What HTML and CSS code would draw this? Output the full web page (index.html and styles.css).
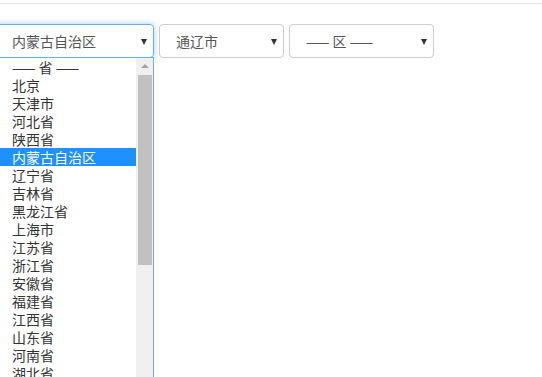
FILE: index.html
```html
<!DOCTYPE html>
<html>
<head>
    <title>省市区选择</title>
    <link rel="stylesheet" href="styles.css">
</head>
<body>
    <div class="topbar"></div>

    <div class="picker">
        <div class="field">
            <div class="select select-province focus">
                <span class="value">内蒙古自治区</span>
                <span class="arrow"></span>
            </div>
            <div class="plist">
                <div class="plist-items">
                    <div class="pitem">—— 省 ——</div>
                    <div class="pitem">北京</div>
                    <div class="pitem">天津市</div>
                    <div class="pitem">河北省</div>
                    <div class="pitem">陕西省</div>
                    <div class="pitem current">内蒙古自治区</div>
                    <div class="pitem">辽宁省</div>
                    <div class="pitem">吉林省</div>
                    <div class="pitem">黑龙江省</div>
                    <div class="pitem">上海市</div>
                    <div class="pitem">江苏省</div>
                    <div class="pitem">浙江省</div>
                    <div class="pitem">安徽省</div>
                    <div class="pitem">福建省</div>
                    <div class="pitem">江西省</div>
                    <div class="pitem">山东省</div>
                    <div class="pitem">河南省</div>
                    <div class="pitem">湖北省</div>
                </div>
                <div class="sbar">
                    <div class="sbar-up"></div>
                    <div class="sbar-thumb"></div>
                </div>
            </div>
        </div>
        <div class="select select-city">
            <span class="value">通辽市</span>
            <span class="arrow"></span>
        </div>
        <div class="select select-area">
            <span class="value">—— 区 ——</span>
            <span class="arrow"></span>
        </div>
    </div>
</body>
</html>
```

FILE: styles.css
```css
body {
    margin: 0;
    font-family: "Noto Sans CJK SC", "DejaVu Sans", sans-serif;
    background-color: #fff;
}
.topbar {
    height: 3px;
    border-bottom: 1px solid #e5e5e5;
}
.picker {
    display: flex;
    align-items: flex-start;
    gap: 5px;
    margin: 20px 0 0 -5px;
}
.field {
    width: 159px;
}
.select {
    position: relative;
    box-sizing: border-box;
    height: 34px;
    border: 1px solid #ccc;
    border-radius: 4px;
    display: flex;
    align-items: center;
    padding-left: 16px;
    font-size: 14px;
    color: #555;
}
.select-province {
    width: 159px;
}
.select-city {
    width: 125px;
}
.select-area {
    width: 145px;
}
.select.focus {
    border-color: #66afe9;
    box-shadow: 0 0 6px rgba(102, 175, 233, .6);
}
.arrow {
    position: absolute;
    right: 6px;
    top: 14px;
    width: 0;
    height: 0;
    border-left: 3.5px solid transparent;
    border-right: 3.5px solid transparent;
    border-top: 6px solid #333;
}
.plist {
    position: relative;
    z-index: 10;
    margin-top: -1px;
    width: 159px;
    height: 330px;
    box-sizing: border-box;
    border: 1px solid #7aa7e8;
    border-top-color: #66afe9;
    background-color: #fff;
    display: flex;
    overflow: hidden;
}
.plist-items {
    flex: 1;
}
.pitem {
    height: 18px;
    line-height: 18px;
    padding-left: 16px;
    font-size: 14px;
    color: #333;
    white-space: nowrap;
    overflow: hidden;
}
.pitem.current {
    background-color: #1e90ff;
    color: #fff;
}
.sbar {
    width: 14px;
    background-color: #f0f0f0;
    padding: 0 1px 0 2px;
}
.sbar-up {
    height: 17px;
    position: relative;
}
.sbar-up::after {
    content: "";
    position: absolute;
    left: 3px;
    top: 6px;
    border-left: 4px solid transparent;
    border-right: 4px solid transparent;
    border-bottom: 4px solid #a3a3a3;
}
.sbar-thumb {
    height: 190px;
    background-color: #c1c1c1;
}
```
